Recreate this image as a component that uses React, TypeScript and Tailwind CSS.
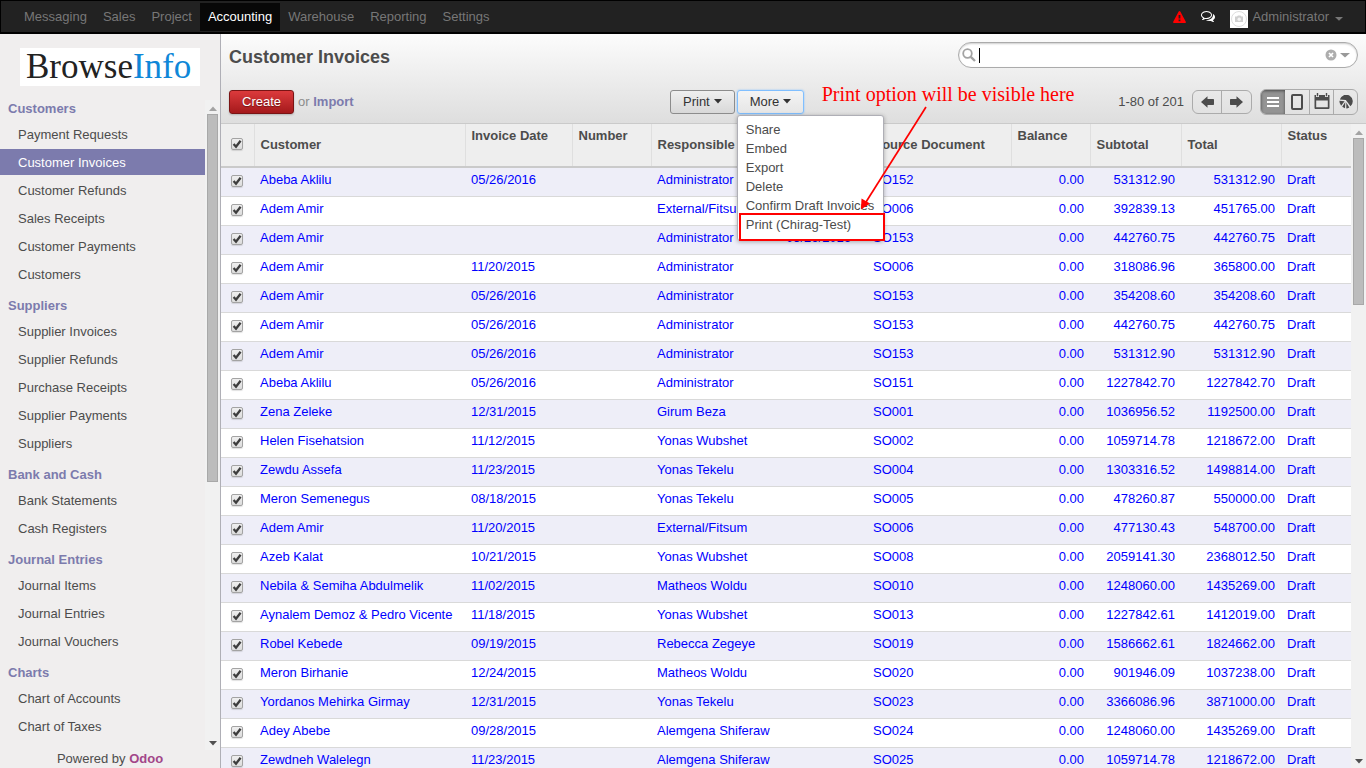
import React from "react";

const apps = ["Messaging", "Sales", "Project", "Accounting", "Warehouse", "Reporting", "Settings"];

const menu = [
  {
    title: "Customers",
    items: ["Payment Requests", "Customer Invoices", "Customer Refunds", "Sales Receipts", "Customer Payments", "Customers"],
  },
  {
    title: "Suppliers",
    items: ["Supplier Invoices", "Supplier Refunds", "Purchase Receipts", "Supplier Payments", "Suppliers"],
  },
  { title: "Bank and Cash", items: ["Bank Statements", "Cash Registers"] },
  { title: "Journal Entries", items: ["Journal Items", "Journal Entries", "Journal Vouchers"] },
  { title: "Charts", items: ["Chart of Accounts", "Chart of Taxes"] },
];

const actions = ["Share", "Embed", "Export", "Delete", "Confirm Draft Invoices", "Print (Chirag-Test)"];

// customer, invoice date, responsible, due date, source, subtotal, total
const invoices: string[][] = [
  ["Abeba Aklilu", "05/26/2016", "Administrator", "", "SO152", "531312.90", "531312.90"],
  ["Adem Amir", "", "External/Fitsum", "", "SO006", "392839.13", "451765.00"],
  ["Adem Amir", "", "Administrator", "05/26/2016", "SO153", "442760.75", "442760.75"],
  ["Adem Amir", "11/20/2015", "Administrator", "", "SO006", "318086.96", "365800.00"],
  ["Adem Amir", "05/26/2016", "Administrator", "", "SO153", "354208.60", "354208.60"],
  ["Adem Amir", "05/26/2016", "Administrator", "", "SO153", "442760.75", "442760.75"],
  ["Adem Amir", "05/26/2016", "Administrator", "", "SO153", "531312.90", "531312.90"],
  ["Abeba Aklilu", "05/26/2016", "Administrator", "", "SO151", "1227842.70", "1227842.70"],
  ["Zena Zeleke", "12/31/2015", "Girum Beza", "", "SO001", "1036956.52", "1192500.00"],
  ["Helen Fisehatsion", "11/12/2015", "Yonas Wubshet", "", "SO002", "1059714.78", "1218672.00"],
  ["Zewdu Assefa", "11/23/2015", "Yonas Tekelu", "", "SO004", "1303316.52", "1498814.00"],
  ["Meron Semenegus", "08/18/2015", "Yonas Tekelu", "", "SO005", "478260.87", "550000.00"],
  ["Adem Amir", "11/20/2015", "External/Fitsum", "", "SO006", "477130.43", "548700.00"],
  ["Azeb Kalat", "10/21/2015", "Yonas Wubshet", "", "SO008", "2059141.30", "2368012.50"],
  ["Nebila & Semiha Abdulmelik", "11/02/2015", "Matheos Woldu", "", "SO010", "1248060.00", "1435269.00"],
  ["Aynalem Demoz & Pedro Vicente", "11/18/2015", "Yonas Wubshet", "", "SO013", "1227842.61", "1412019.00"],
  ["Robel Kebede", "09/19/2015", "Rebecca Zegeye", "", "SO019", "1586662.61", "1824662.00"],
  ["Meron Birhanie", "12/24/2015", "Matheos Woldu", "", "SO020", "901946.09", "1037238.00"],
  ["Yordanos Mehirka Girmay", "12/31/2015", "Yonas Tekelu", "", "SO023", "3366086.96", "3871000.00"],
  ["Adey Abebe", "09/28/2015", "Alemgena Shiferaw", "", "SO024", "1248060.00", "1435269.00"],
  ["Zewdneh Walelegn", "11/23/2015", "Alemgena Shiferaw", "", "SO025", "1059714.78", "1218672.00"],
];

const columns: { label: string; top?: boolean }[] = [
  { label: "Customer" },
  { label: "Invoice Date", top: true },
  { label: "Number", top: true },
  { label: "Responsible" },
  { label: "Due Date" },
  { label: "Source Document" },
  { label: "Balance", top: true },
  { label: "Subtotal" },
  { label: "Total" },
  { label: "Status", top: true },
];

function Caret({ className }: { className: string }) {
  return (
    <svg viewBox="0 0 8 5" className={className} fill="currentColor" preserveAspectRatio="none" aria-hidden="true">
      <path d="M0 0h8L4 4.6z" />
    </svg>
  );
}

function Tick({ label }: { label: string }) {
  return (
    <span className="relative block size-3">
      <input
        type="checkbox"
        defaultChecked
        aria-label={label}
        className="peer block size-3 appearance-none rounded-xs border border-[#a3a3a3] bg-linear-to-b from-[#efefef] to-[#dcdcdc] shadow-[0_1px_1px_rgba(0,0,0,0.12)]"
      />
      <svg viewBox="0 0 12 12" className="pointer-events-none absolute inset-0 hidden size-3 peer-checked:block" aria-hidden="true">
        <path d="M2.600 6l2.400 2.700 4.600-6" fill="none" stroke="#3d3d3d" strokeWidth="2.300" />
      </svg>
    </span>
  );
}

function ScrollBar({ thumb }: { thumb: string }) {
  return (
    <div className="flex w-[15px] shrink-0 flex-col items-center bg-[#f1f1f1] px-px" aria-hidden="true">
      <Caret className="mt-[6px] mb-[3px] h-[5px] w-2 shrink-0 rotate-180 text-[#a3a3a3]" />
      <div className={`w-[11px] shrink-0 border border-[#a8a8a8] bg-[#bcbcbc] ${thumb}`} />
      <Caret className="mt-auto mb-1 h-[5px] w-2 shrink-0 text-[#505050]" />
    </div>
  );
}

function TopBar() {
  return (
    <header className="flex h-[34px] shrink-0 items-center border border-b-2 border-black bg-[#222] pl-[15px] pr-[22px] text-[#777]">
      <nav className="flex">
        {apps.map((app) => (
          <a
            key={app}
            href="#"
            className={`h-7 px-2 leading-7 ${app === "Accounting" ? "bg-[#080808] text-white" : ""}`}
          >
            {app}
          </a>
        ))}
      </nav>
      <div className="ml-auto flex items-center">
        <button type="button" aria-label="Warnings" className="text-[#f00]">
          <svg viewBox="0 0 13 12" className="h-3 w-[13px]" fill="currentColor">
            <path fillRule="evenodd" d="M6.500 0Q7 0 7.300 0.600L12.800 10.700Q13.300 12 12 12H1Q-0.300 12 0.200 10.700L5.700 0.600Q6 0 6.500 0zM5.600 4V7.500H7.400V4zM5.600 8.500V10.200H7.400V8.500z" />
          </svg>
        </button>
        <button type="button" aria-label="Chat" className="ml-[15px] text-white">
          <svg viewBox="0 0 1792 1536" className="h-3 w-[14px]" fill="currentColor">
            <path d="M704 128q-153 0-286 52T206.500 321 128 512q0 82 53 158t149 132l97 56-35 84q34-20 62-39l44-31 53 10q78 14 153 14 153 0 286-52t211.500-141T1280 512t-78.500-191T990 180t-286-52zm0-128q191 0 353.500 68.500t256.500 186.500 94 257-94 257-256.500 186.500T704 1024q-86 0-176-16-124 88-278 128-36 9-86 16h-3q-11 0-20.500-8t-11.500-21q-1-3-1-6.500t.5-6.500 2-6l2.500-5 3.500-5.500 4-5 4.500-5 4-4.500q5-6 23-25t26-29.500 22.500-29 25-38.500 20.500-44Q142 844 71 736T0 512q0-139 94-257t256.500-186.500T704 0zm822 1169q10 24 20.500 44t25 38.500 22.500 29 26 29.500 23 25q1 1 4 4.500t4.500 5 4 5 3.500 5.500l2.500 5 2 6 .5 6.500-1 6.500q-3 14-13 22t-22 7q-50-7-86-16-154-40-278-128-90 16-176 16-271 0-472-132 58 4 88 4 161 0 309-45t264-129q125-92 192-212t67-254q0-77-23-152 129 71 204 178t75 230q0 120-71 224.500T1526 1169z" />
          </svg>
        </button>
        <button type="button" className="ml-[15px] flex items-center">
          <svg viewBox="0 0 18 18" className="mt-1 size-[18px] bg-white" aria-hidden="true">
            <circle cx="9" cy="9" r="7.500" fill="none" stroke="#dedede" />
            <path d="M5 6.500h2l1-1h2.500l1 1h1.500v5.500H5z" fill="#cfcfcf" />
            <circle cx="9.200" cy="9.200" r="1.700" fill="#f4f4f4" />
          </svg>
          <span className="ml-1">Administrator</span>
          <Caret className="mt-1 ml-[6px] h-1 w-2" />
        </button>
      </div>
    </header>
  );
}

function Sidebar() {
  return (
    <aside className="flex w-[221px] shrink-0 flex-col border-r border-[#afafb6] bg-[#f0eeee]">
      <a
        href="#"
        className="mx-5 my-[14px] block h-[38px] bg-white pl-[6px] font-['Liberation_Serif',serif] text-[35px] leading-[38px] text-[#222]"
      >
        Browse<span className="text-[#0f87d8]">Info</span>
      </a>
      <div className="flex min-h-0 flex-1">
        <nav className="min-w-0 flex-1 overflow-hidden pt-px">
          {menu.map((group) => (
            <section key={group.title} className="mb-[9px]">
              <h2 className="mb-1 pl-2 font-bold leading-4 text-[#7c7bad]">{group.title}</h2>
              <ul>
                {group.items.map((item) => (
                  <li key={item} className="pb-[2px]">
                    <a
                      href="#"
                      className={`block h-[26px] pl-[18px] leading-[27px] ${
                        item === "Customer Invoices" ? "bg-[#7c7bad] text-white" : ""
                      }`}
                    >
                      {item}
                    </a>
                  </li>
                ))}
              </ul>
            </section>
          ))}
        </nav>
        <ScrollBar thumb="h-[368px]" />
      </div>
      <footer className="h-[18px] text-center">
        Powered by{" "}
        <a href="#" className="font-bold text-[#a24689]">
          Odoo
        </a>
      </footer>
    </aside>
  );
}

function MoreMenu() {
  return (
    <div className="relative">
      <button
        type="button"
        className="flex h-6 items-center gap-1 rounded-[3px] border border-[#80bfff] bg-linear-to-b from-[#f4f4f4] to-[#e6e6e6] px-3 text-[#333] shadow-[0_0_2px_#80bfff]"
      >
        More
        <Caret className="h-[5px] w-2" />
      </button>
      <ul className="absolute top-[25px] left-0 z-10 w-[147px] rounded-[3px] border border-[#afafb6] bg-white pt-1 pb-[6px] shadow-[0_1px_4px_rgba(0,0,0,0.3)]">
        {actions.map((action) => (
          <li key={action}>
            <a href="#" className="block h-[19px] whitespace-nowrap pl-2 leading-[19px]">
              {action}
            </a>
          </li>
        ))}
      </ul>
      <div className="pointer-events-none absolute top-[123px] left-[2px] z-20 h-7 w-[146px] border-2 border-[#f00]" />
      <p className="pointer-events-none absolute -top-2 left-[85px] z-20 whitespace-nowrap font-['Liberation_Serif',serif] text-[20px] leading-6 text-[#f00]">
        Print option will be visible here
      </p>
      <svg viewBox="0 0 70 106" className="pointer-events-none absolute top-[15px] left-[122px] z-20 h-[106px] w-[70px]" aria-hidden="true">
        <path d="M67 2L7 97" stroke="#f00" strokeWidth="1.700" />
        <path d="M2 104.500L2.500 93.500L11 98.500z" fill="#f00" />
      </svg>
    </div>
  );
}

const pagerButton = "flex h-[22px] w-[29px] items-center justify-center text-[#4c4c4c]";
const viewButton = "flex h-6 w-6 items-center justify-center text-[#4c4c4c]";

function Toolbar() {
  return (
    <div className="shrink-0 border-b border-[#cacaca] bg-linear-to-b from-[#fcfcfc] to-[#dedede] px-2">
      <div className="flex h-[46px] items-center justify-between">
        <h1 className="text-[18px] font-bold">Customer Invoices</h1>
        <form className="-mt-1 flex h-[26px] w-[400px] items-center rounded-full border border-[#ababab] bg-white pl-[3px] pr-[7px] shadow-[inset_0_1px_2px_rgba(0,0,0,0.2)]">
          <svg viewBox="0 0 14 14" className="size-[14px]" fill="none" stroke="#a3a3a3" aria-hidden="true">
            <circle cx="5.500" cy="5.500" r="4.300" strokeWidth="1.800" />
            <path d="M8.800 8.800l4.200 4.200" strokeWidth="2.400" />
          </svg>
          <input
            type="text"
            aria-label="Search"
            className="ml-[3px] h-[15px] min-w-0 flex-1 border-l border-black bg-transparent pl-1 outline-none"
          />
          <button type="button" aria-label="Clear search">
            <svg viewBox="0 0 12 12" className="size-3">
              <circle cx="6" cy="6" r="5.500" fill="#adadad" />
              <path d="M4 4l4 4M8 4l-4 4" stroke="#fff" strokeWidth="1.700" />
            </svg>
          </button>
          <button type="button" aria-label="Advanced search" className="ml-[3px] text-[#999]">
            <Caret className="h-[5px] w-[10px]" />
          </button>
        </form>
      </div>
      <div className="grid h-[43px] grid-cols-[441px_1fr_auto] items-center">
        <div className="flex items-center gap-1">
          <button
            type="button"
            className="h-6 rounded-[3px] border border-[#7a1414] bg-linear-to-b from-[#dc3a3c] to-[#a5191b] px-3 text-white shadow-[0_1px_2px_rgba(0,0,0,0.2)] [text-shadow:0_1px_1px_rgba(0,0,0,0.4)]"
          >
            Create
          </button>
          <span className="text-[#8c8c8c]">
            or{" "}
            <a href="#" className="font-bold text-[#7c7bad]">
              Import
            </a>
          </span>
        </div>
        <div className="flex gap-[2px]">
          <button
            type="button"
            className="flex h-6 items-center gap-1 rounded-[3px] border border-[#8c8c8c] bg-linear-to-b from-[#efefef] to-[#d8d8d8] px-3 text-[#333]"
          >
            Print
            <Caret className="h-[5px] w-2" />
          </button>
          <MoreMenu />
        </div>
        <div className="flex items-center gap-2">
          <span>1-80 of 201</span>
          <div className="flex divide-x divide-[#ababab] rounded-md border border-[#ababab]">
            <button type="button" aria-label="Previous page" className={pagerButton}>
              <svg viewBox="0 0 13 12" className="mt-px h-3 w-[13px]" fill="currentColor">
                <path d="M0 6L6.500 0.300V3H12.300Q13 3 13 3.700V8.300Q13 9 12.300 9H6.500V11.700z" />
              </svg>
            </button>
            <button type="button" aria-label="Next page" className={pagerButton}>
              <svg viewBox="0 0 13 12" className="mt-px h-3 w-[13px]" fill="currentColor">
                <path d="M13 6L6.500 0.300V3H0.700Q0 3 0 3.700V8.300Q0 9 0.700 9H6.500V11.700z" />
              </svg>
            </button>
          </div>
          <div className="flex overflow-hidden rounded-md border border-[#ababab]">
            <button type="button" aria-label="List" className="flex h-6 w-6 items-center justify-center bg-[#949494] text-white shadow-[inset_0_1px_3px_rgba(0,0,0,0.5)]">
              <svg viewBox="0 0 12 10" className="mt-px h-[10px] w-3" fill="currentColor">
                <path d="M0 0h12v2H0zM0 4h12v2H0zM0 8h12v2H0z" />
              </svg>
            </button>
            <button type="button" aria-label="Form" className={viewButton}>
              <svg viewBox="0 0 12 16" className="h-4 w-3" fill="none" stroke="currentColor" strokeWidth="2">
                <rect x="1" y="1" width="10" height="14" rx="1" />
              </svg>
            </button>
            <button type="button" aria-label="Calendar" className={`${viewButton} border-l border-[#ababab]`}>
              <svg viewBox="0 0 16 16" className="mb-px size-4 shrink-0" fill="currentColor">
                <path fillRule="evenodd" d="M0.500 2h1.500v2h3V2h6v2h3V2h1.500V15q0 1-1 1H1.500q-1 0-1-1zM2.200 7.500V14.300H13.800V7.500z" />
                <path d="M2.800 0h1.400v3.300H2.800zM11.800 0h1.400v3.300h-1.400z" />
              </svg>
            </button>
            <button type="button" aria-label="Graph" className={`${viewButton} border-l border-[#ababab]`}>
              <svg viewBox="0 0 14 14" className="size-[14px] shrink-0" fill="currentColor">
                <path d="M6.800 5L0.800 4.500A6.600 6.600 0 1 1 11.500 11.300z" />
                <path d="M5.600 6.200L0.400 5.800A6.500 6.500 0 0 0 2.200 10.800z" />
                <path d="M6.300 7L3.200 11.800A6.600 6.600 0 0 0 6 13.200zM7.300 7.500V13.400A6.600 6.600 0 0 0 10.300 12.400z" />
              </svg>
            </button>
          </div>
        </div>
      </div>
    </div>
  );
}

function InvoiceTable() {
  return (
    <table className="w-full table-fixed border-collapse">
      <colgroup>
        <col className="w-[33px]" />
        <col />
        <col className="w-[107px]" />
        <col className="w-[79px]" />
        <col className="w-[129px]" />
        <col className="w-[87px]" />
        <col className="w-[144px]" />
        <col className="w-[79px]" />
        <col className="w-[91px]" />
        <col className="w-[100px]" />
        <col className="w-[70px]" />
      </colgroup>
      <thead>
        <tr className="h-[43px] border-b-2 border-[#cacaca] bg-[#eee] text-left">
          <th className="border-r border-[#dfdfdf] pb-[3px] pl-[10px]">
            <Tick label="Select all" />
          </th>
          {columns.map((column, index) => (
            <th
              key={column.label}
              className={`whitespace-nowrap px-[6px] ${index < columns.length - 1 ? "border-r border-[#dfdfdf]" : ""} ${
                column.top ? "pb-[19px]" : "pb-px"
              }`}
            >
              {column.label}
            </th>
          ))}
        </tr>
      </thead>
      <tbody className="text-[#00f]">
        {invoices.map(([customer, date, responsible, due, source, subtotal, total], index) => (
          <tr key={index} className="h-[29px] border-b border-[#d9d9d9] align-top odd:bg-[#eeeef8]">
            <td className="pt-[7px] pl-[10px]">
              <Tick label={`Select ${customer}`} />
            </td>
            <td className="whitespace-nowrap px-[6px] pt-[3px]">{customer}</td>
            <td className="px-[6px] pt-[3px]">{date}</td>
            <td />
            <td className="whitespace-nowrap px-[6px] pt-[3px]">{responsible}</td>
            <td className="px-[6px] pt-[3px]">{due}</td>
            <td className="px-[6px] pt-[3px]">{source}</td>
            <td className="px-[6px] pt-[3px] text-right">0.00</td>
            <td className="px-[6px] pt-[3px] text-right">{subtotal}</td>
            <td className="px-[6px] pt-[3px] text-right">{total}</td>
            <td className="px-[6px] pt-[3px]">Draft</td>
          </tr>
        ))}
      </tbody>
    </table>
  );
}

export default function App() {
  return (
    <div className="flex h-screen flex-col overflow-hidden bg-white font-['Liberation_Sans',Arial,sans-serif] text-[13px] leading-[18px] text-[#4c4c4c]">
      <TopBar />
      <div className="flex min-h-0 flex-1">
        <Sidebar />
        <main className="flex min-w-0 flex-1 flex-col">
          <Toolbar />
          <div className="flex min-h-0 flex-1">
            <div className="min-w-0 flex-1 overflow-hidden">
              <InvoiceTable />
            </div>
            <ScrollBar thumb="h-[26%]" />
          </div>
        </main>
      </div>
    </div>
  );
}
